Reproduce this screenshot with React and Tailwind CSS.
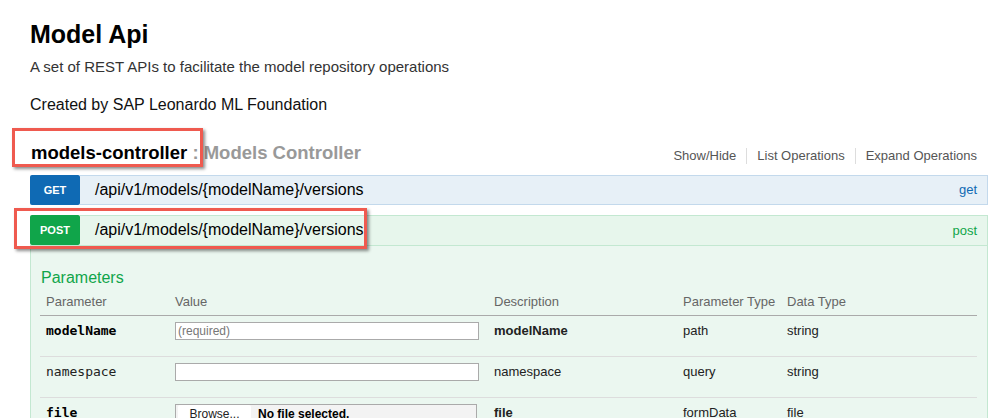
import React from "react";

const params = [
  { name: "modelName", required: true, value: "input", type: "path", data: "string" },
  { name: "namespace", required: false, value: "input", type: "query", data: "string" },
  { name: "file", required: true, value: "file", type: "formData", data: "file" },
];

const Badge = ({ label, color }) => (
  <div className={`w-[50px] h-full shrink-0 rounded-[2px] flex items-center justify-center text-white text-[11px] font-bold ${color}`}>
    {label}
  </div>
);

const App = () => {
  return (
    <div className="relative w-[991px] h-[418px] overflow-hidden bg-white pl-[30px] pr-[3px] font-['Liberation_Sans',Arial,sans-serif] text-[#222]">
      <h1 className="pt-[21.8px] text-[25px] leading-[25px] font-bold text-black">Model Api</h1>
      <p className="mt-[12.5px] text-[15px] leading-[15px] text-[#333]">
        A set of REST APIs to facilitate the model repository operations
      </p>
      <p className="mt-[23.2px] text-[16px] leading-[16px] text-[#111]">Created by SAP Leonardo ML Foundation</p>

      {/* resource header */}
      <div className="mt-[31px] h-[30.5px] flex justify-between">
        <h2 className="pl-px text-[18.5px] leading-[18.5px] font-bold">
          <span className="text-black">models-controller</span>
          <span className="text-[#999]"> : Models Controller</span>
        </h2>
        <div className="mt-[3.5px] h-[16px] pr-[11px] flex items-center text-[13px] leading-[13px] text-[#555]">
          <span className="pr-[10px]">Show/Hide</span>
          <span className="h-[16px] w-px bg-[#ddd]" />
          <span className="px-[10px]">List Operations</span>
          <span className="h-[16px] w-px bg-[#ddd]" />
          <span className="pl-[10px]">Expand Operations</span>
        </div>
      </div>

      {/* GET */}
      <div className="h-[30px] flex">
        <Badge label="GET" color="bg-[#0f6ab4]" />
        <div className="flex-1 flex items-center justify-between bg-[#e7f0f7] border border-l-0 border-[#c3d9ec] pl-[15px] pr-[10px]">
          <span className="text-[16px] text-black">/api/v1/models/{"{modelName}"}/versions</span>
          <span className="text-[13px] text-[#0f6ab4]">get</span>
        </div>
      </div>

      {/* POST */}
      <div className="mt-[10px] h-[30px] flex">
        <Badge label="POST" color="bg-[#10a54a]" />
        <div className="flex-1 flex items-center justify-between bg-[#e7f6ec] border border-l-0 border-b-0 border-[#c3e8d1] pl-[15px] pr-[10px]">
          <span className="text-[16px] text-black">/api/v1/models/{"{modelName}"}/versions</span>
          <span className="text-[13px] text-[#10a54a]">post</span>
        </div>
      </div>

      <div className="h-[200px] bg-[#ebf7f0] border border-[#c3e8d1] px-[9px] pt-[24px]">
        <h4 className="pl-px text-[16px] leading-[16px] text-[#10a54a]">Parameters</h4>
        <div className="mr-[1px]">
          <div className="mt-[9.5px] pb-[6.5px] border-b border-[#aaa] grid grid-cols-[129px_319px_189px_104px_1fr] text-[13px] leading-[13px] text-[#666]">
            <div className="pl-[6px]">Parameter</div>
            <div className="pl-[6px]">Value</div>
            <div className="pl-[6px]">Description</div>
            <div className="pl-[6px]">Parameter Type</div>
            <div className="pl-[6px]">Data Type</div>
          </div>
          {params.map((p) => (
            <div
              key={p.name}
              className="h-[41px] pt-[6px] border-b border-[#ddd] grid grid-cols-[129px_319px_189px_104px_1fr] items-start text-[13px] leading-[18px] text-[#222]"
            >
              <div className={`pl-[6px] font-['DejaVu_Sans_Mono',monospace] ${p.required ? "font-bold text-black" : ""}`}>
                {p.name}
              </div>
              <div className="pl-[6px]">
                {p.value === "file" ? (
                  <div className="w-[302px] h-[20px] border border-[#aaa] bg-[#f3f3f3] flex items-center text-[12px]">
                    <span className="ml-[2px] w-[73px] h-[17px] bg-white rounded-[2px] flex items-center justify-center text-[#222]">
                      Browse...
                    </span>
                    <span className="ml-[7px] font-bold text-black">No file selected.</span>
                  </div>
                ) : (
                  <input
                    readOnly
                    placeholder={p.required ? "(required)" : ""}
                    className="block w-[304px] h-[18px] border border-[#aaa] bg-white px-[2px] text-[12px] placeholder:text-[#777] outline-none"
                  />
                )}
              </div>
              <div className={`pl-[6px] ${p.required ? "font-bold" : ""}`}>{p.name}</div>
              <div className="pl-[6px]">{p.type}</div>
              <div className="pl-[6px]">{p.data}</div>
            </div>
          ))}
        </div>
      </div>

      {/* annotation boxes */}
      <div className="absolute left-[12px] top-[128px] w-[191px] h-[39px] border-[3px] border-[#ef5a4f] shadow-[2px_2px_3px_rgba(0,0,0,0.45)]" />
      <div className="absolute left-[14px] top-[208px] w-[353px] h-[41px] border-[3px] border-[#ef5a4f] shadow-[2px_2px_3px_rgba(0,0,0,0.45)]" />
    </div>
  );
};

export default App;
